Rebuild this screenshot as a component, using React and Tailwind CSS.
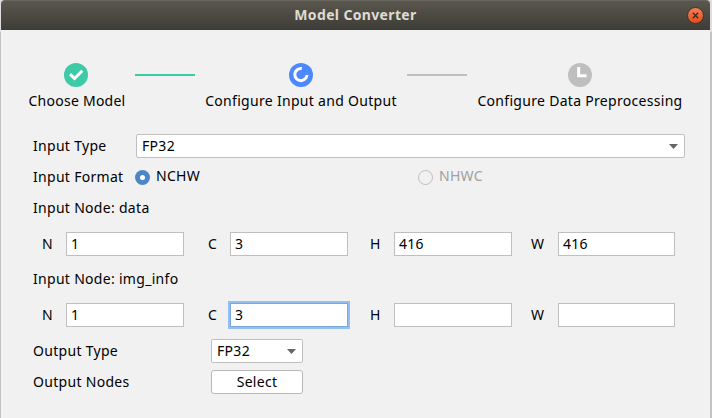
import React from "react";

function CheckIcon() {
  return (
    <svg width="24" height="24" viewBox="0 0 24 24" className="block">
      <circle cx="12" cy="12" r="12" fill="#3ecaa6" />
      <path d="M6 11.2l4.5 4.3 7.8-7.8" fill="none" stroke="#fff" strokeWidth="3" />
    </svg>
  );
}

function ProgressIcon() {
  return (
    <svg width="24" height="24" viewBox="0 0 24 24" className="block">
      <circle cx="12" cy="12" r="12" fill="#4d88ff" />
      <path d="M12.8 5.5A6.1 6.1 0 1 0 18 12" fill="none" stroke="#fff" strokeWidth="3" />
    </svg>
  );
}

function ClockIcon() {
  return (
    <svg width="24" height="24" viewBox="0 0 24 24" className="block">
      <circle cx="12" cy="12" r="12" fill="#bfbfbf" />
      <path d="M10.7 4v8.7H18.5" fill="none" stroke="#fff" strokeWidth="3" />
    </svg>
  );
}

function Step({ icon, label, className, labelClass = "" }) {
  return (
    <div className={"flex shrink-0 flex-col items-center " + className}>
      {icon}
      <span className={"mt-1 h-5 leading-5 " + labelClass}>{label}</span>
    </div>
  );
}

function Arrow() {
  return (
    <svg width="9" height="5" viewBox="0 0 9 5" className="block">
      <path d="M0 0h9L4.5 5z" fill="#666" />
    </svg>
  );
}

function Select({ value, className }) {
  return (
    <div className={"flex h-6 items-center justify-between rounded-[2px] border border-[#bfbfbf] bg-white pr-1.5 pl-[5px] " + className}>
      <span>{value}</span>
      <Arrow />
    </div>
  );
}

function Dims({ values, focused, className }) {
  const names = ["N", "C", "H", "W"];
  const labels = ["w-[24px]", "w-[22px]", "w-[24px]", "w-[27px]"];
  const boxes = ["w-[118px] mr-[24px]", "w-[118px] mr-[22px]", "w-[118px] mr-[19px]", "w-[117px]"];
  return (
    <div className={"ml-[41px] flex h-6 items-center " + className}>
      {names.map((name, i) => (
        <React.Fragment key={name}>
          <span className={"shrink-0 " + labels[i]}>{name}</span>
          <div
            className={
              "flex h-6 shrink-0 items-center border bg-white pl-1 " +
              boxes[i] +
              (focused === i
                ? " border-[#7ba7d9] shadow-[0_0_0_2px_#94bff3]"
                : " border-[#bfbfbf]")
            }
          >
            {values[i]}
          </div>
        </React.Fragment>
      ))}
    </div>
  );
}

export default function App() {
  return (
    <div className="flex h-[418px] w-[712px] overflow-hidden bg-linear-to-b from-[#dedede] from-[32px] to-[#c3c3c3] to-[32px] pr-0.5 pl-px font-['Noto_Sans',sans-serif] text-[14px] leading-5 tracking-[0.3px] whitespace-nowrap text-black">
      <div className="flex w-[709px] flex-col rounded-t-[4px] bg-[#f1f1f1]">
        <header className="grid h-[30px] shrink-0 grid-cols-[1fr_auto_1fr] items-center rounded-t-[4px] border-t border-[#66645c] bg-linear-to-b from-[#5a574e] to-[#3d3c36] px-[6px]">
          <span />
          <span className="-mt-px font-bold tracking-[0.35px] text-[#dfdbd2]">Model Converter</span>
          <svg width="17" height="17" viewBox="0 0 17 17" className="-mt-px block justify-self-end">
            <defs>
              <linearGradient id="close" x1="0" y1="0" x2="0" y2="1">
                <stop offset="0" stopColor="#f4825b" />
                <stop offset="1" stopColor="#df4b1b" />
              </linearGradient>
            </defs>
            <circle cx="8.5" cy="8.5" r="8" fill="url(#close)" stroke="#38362f" />
            <path d="M5.8 5.8l5.4 5.4M11.2 5.8l-5.4 5.4" stroke="#46291d" strokeWidth="1.4" />
          </svg>
        </header>

        <div className="mt-[33px] flex h-12 shrink-0">
          <Step icon={<CheckIcon />} label="Choose Model" className="ml-[25px] w-[100px]" labelClass="ml-0.5 tracking-[0.25px]" />
          <div className="mt-[11px] ml-[9px] h-0.5 w-[60px] shrink-0 bg-[#3ecaa6]" />
          <Step icon={<ProgressIcon />} label="Configure Input and Output" className="ml-[6px] w-[200px]" />
          <div className="mt-[11px] ml-[6px] h-0.5 w-[60px] shrink-0 bg-[#bfbfbf]" />
          <Step icon={<ClockIcon />} label="Configure Data Preprocessing" className="ml-[8px] w-[210px]" />
        </div>

        <div className="mt-[23px] flex h-6 shrink-0 items-center pl-8">
          <span className="w-[103px] shrink-0">Input Type</span>
          <Select value="FP32" className="w-[549px]" />
        </div>

        <div className="mt-2 flex h-[22px] shrink-0 items-center pl-8">
          <span className="w-[102px] shrink-0">Input Format</span>
          <div className="flex size-[15px] shrink-0 items-center justify-center rounded-full bg-[#4a86c8]">
            <div className="size-[5px] rounded-full bg-white" />
          </div>
          <span className="mb-0.5 ml-1.5 w-[262px]">NCHW</span>
          <div className="size-[15px] shrink-0 rounded-full border border-[#bfbfbf]" />
          <span className="mb-0.5 ml-1.5 text-[#a0a0a0]">NHWC</span>
        </div>

        <div className="mt-2.5 h-5 shrink-0 pl-8">Input Node: data</div>
        <Dims values={["1", "3", "416", "416"]} className="mt-3.5 shrink-0" />
        <div className="mt-[13px] h-5 shrink-0 pl-8">Input Node: img_info</div>
        <Dims values={["1", "3", "", ""]} focused={1} className="mt-3.5 shrink-0" />

        <div className="mt-3 flex h-6 shrink-0 items-center pl-8">
          <span className="w-[178px]">Output Type</span>
          <Select value="FP32" className="w-[92px]" />
        </div>
        <div className="mt-[7px] flex h-6 shrink-0 items-center pl-8">
          <span className="w-[178px]">Output Nodes</span>
          <button className="flex h-6 w-[92px] items-center justify-center rounded-[3px] border border-[#b8b8b8] bg-white tracking-[0.3px]">
            Select
          </button>
        </div>
      </div>
    </div>
  );
}
